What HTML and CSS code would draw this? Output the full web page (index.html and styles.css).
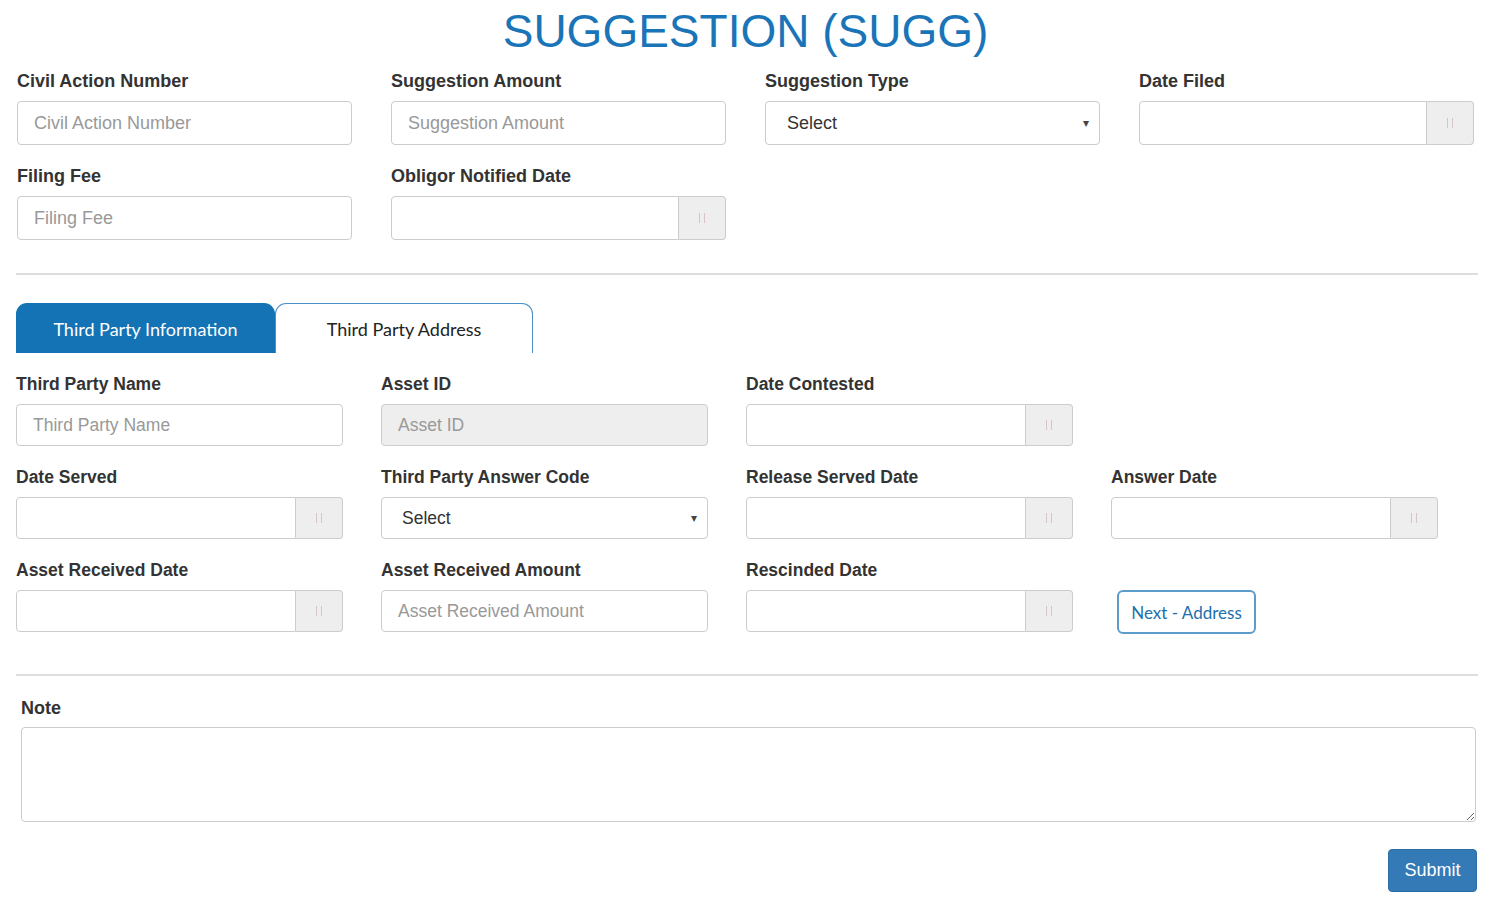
FILE: index.html
```html
<!DOCTYPE html>
<html>
<head>
<meta charset="utf-8">
<link rel="stylesheet" href="styles.css">
</head>
<body>
<h1 class="title">SUGGESTION (SUGG)</h1>

<div class="grid top">
  <div class="field">
    <label class="lbl">Civil Action Number</label>
    <input class="ctl" type="text" placeholder="Civil Action Number">
  </div>
  <div class="field">
    <label class="lbl">Suggestion Amount</label>
    <input class="ctl" type="text" placeholder="Suggestion Amount">
  </div>
  <div class="field">
    <label class="lbl">Suggestion Type</label>
    <div class="ctl sel"><span>Select</span><span class="arrow">&#9662;</span></div>
  </div>
  <div class="field">
    <label class="lbl">Date Filed</label>
    <div class="date"><input class="ctl" type="text"><span class="addon"><svg width="10" height="10" viewBox="0 0 10 10"><path d="M2.5 0v10M7.5 0v10" stroke="#d8c4c4" stroke-width="1"/></svg></span></div>
  </div>
  <div class="field">
    <label class="lbl">Filing Fee</label>
    <input class="ctl" type="text" placeholder="Filing Fee">
  </div>
  <div class="field">
    <label class="lbl">Obligor Notified Date</label>
    <div class="date"><input class="ctl" type="text"><span class="addon"><svg width="10" height="10" viewBox="0 0 10 10"><path d="M2.5 0v10M7.5 0v10" stroke="#d8c4c4" stroke-width="1"/></svg></span></div>
  </div>
</div>

<hr class="sep sep1">

<div class="tabs">
  <div class="tab active">Third Party Information</div>
  <div class="tab">Third Party Address</div>
</div>

<div class="grid second">
  <div class="field">
    <label class="lbl">Third Party Name</label>
    <input class="ctl" type="text" placeholder="Third Party Name">
  </div>
  <div class="field">
    <label class="lbl">Asset ID</label>
    <input class="ctl disabled" type="text" placeholder="Asset ID" disabled>
  </div>
  <div class="field">
    <label class="lbl">Date Contested</label>
    <div class="date"><input class="ctl" type="text"><span class="addon"><svg width="10" height="10" viewBox="0 0 10 10"><path d="M2.5 0v10M7.5 0v10" stroke="#d8c4c4" stroke-width="1"/></svg></span></div>
  </div>
  <div class="field empty"></div>

  <div class="field">
    <label class="lbl">Date Served</label>
    <div class="date"><input class="ctl" type="text"><span class="addon"><svg width="10" height="10" viewBox="0 0 10 10"><path d="M2.5 0v10M7.5 0v10" stroke="#d8c4c4" stroke-width="1"/></svg></span></div>
  </div>
  <div class="field">
    <label class="lbl">Third Party Answer Code</label>
    <div class="ctl sel"><span>Select</span><span class="arrow">&#9662;</span></div>
  </div>
  <div class="field">
    <label class="lbl">Release Served Date</label>
    <div class="date"><input class="ctl" type="text"><span class="addon"><svg width="10" height="10" viewBox="0 0 10 10"><path d="M2.5 0v10M7.5 0v10" stroke="#d8c4c4" stroke-width="1"/></svg></span></div>
  </div>
  <div class="field">
    <label class="lbl">Answer Date</label>
    <div class="date"><input class="ctl" type="text"><span class="addon"><svg width="10" height="10" viewBox="0 0 10 10"><path d="M2.5 0v10M7.5 0v10" stroke="#d8c4c4" stroke-width="1"/></svg></span></div>
  </div>

  <div class="field">
    <label class="lbl">Asset Received Date</label>
    <div class="date"><input class="ctl" type="text"><span class="addon"><svg width="10" height="10" viewBox="0 0 10 10"><path d="M2.5 0v10M7.5 0v10" stroke="#d8c4c4" stroke-width="1"/></svg></span></div>
  </div>
  <div class="field">
    <label class="lbl">Asset Received Amount</label>
    <input class="ctl" type="text" placeholder="Asset Received Amount">
  </div>
  <div class="field">
    <label class="lbl">Rescinded Date</label>
    <div class="date"><input class="ctl" type="text"><span class="addon"><svg width="10" height="10" viewBox="0 0 10 10"><path d="M2.5 0v10M7.5 0v10" stroke="#d8c4c4" stroke-width="1"/></svg></span></div>
  </div>
  <div class="field btnfield">
    <button class="next">Next - Address</button>
  </div>
</div>

<hr class="sep sep2">

<div class="note">
  <label class="lbl">Note</label>
  <textarea class="notearea"></textarea>
</div>

<div class="actions">
  <button class="submit">Submit</button>
</div>
</body>
</html>
```

FILE: styles.css
```css
* { box-sizing: border-box; }
body {
  margin: 0;
  font-family: "Liberation Sans", Arial, sans-serif;
  color: #333;
  background: #fff;
}
.title {
  margin: 0;
  padding-top: 6px;
  height: 71px;
  text-align: center;
  font-weight: normal;
  font-size: 46px;
  line-height: 50px;
  color: #1a75b8;
}
.grid {
  display: grid;
  grid-template-columns: repeat(4, 335px);
  column-gap: 39px;
}
.top {
  padding-left: 17px;
  row-gap: 21px;
}
.field {
  display: flex;
  flex-direction: column;
}
.lbl {
  display: block;
  font-weight: bold;
  font-size: 18px;
  line-height: 20px;
  height: 30px;
  color: #333;
}
.ctl {
  width: 100%;
  height: 44px;
  border: 1px solid #ccc;
  border-radius: 4px;
  padding: 0 16px;
  font-family: "Liberation Sans", Arial, sans-serif;
  font-size: 18px;
  color: #555;
  background: #fff;
  outline: none;
}
.ctl::placeholder { color: #999; }
.sel {
  display: flex;
  align-items: center;
  justify-content: space-between;
  padding: 0 10px 0 21px;
  color: #333;
}
.arrow {
  font-size: 12px;
  color: #444;
}
.date {
  display: flex;
  height: 44px;
}
.date .ctl {
  flex: 1;
  min-width: 0;
  border-radius: 4px 0 0 4px;
}
.addon {
  width: 47px;
  flex: none;
  display: flex;
  align-items: center;
  justify-content: center;
  background: #eee;
  border: 1px solid #ccc;
  border-left: none;
  border-radius: 0 4px 4px 0;
}
.sep {
  border: none;
  border-top: 2px solid #ddd;
  margin: 0 13px 0 16px;
}
.sep1 { margin-top: 33px; }
.tabs {
  display: flex;
  margin: 28px 0 0 16px;
  font-family: "Lato", "Open Sans", sans-serif;
  font-size: 18px;
}
.tab {
  height: 50px;
  display: flex;
  align-items: center;
  justify-content: center;
  border-radius: 11px 11px 0 0;
  border: 1px solid #4b91c6;
  border-bottom: none;
  width: 258px;
  color: #222;
  background: #fff;
}
.tab.active {
  width: 259px;
  background: #1473b4;
  border-color: #1473b4;
  color: #fff;
}
.second {
  padding-left: 16px;
  grid-template-columns: repeat(4, 327px);
  column-gap: 38px;
  row-gap: 21px;
  margin-top: 21px;
}
.second .lbl { font-size: 17.5px; }
.second .ctl { font-size: 17.5px; }
.second .ctl, .second .date { height: 42px; }
.second .sel { padding-left: 20px; }
.disabled { background: #eee; }
.btnfield {
  justify-content: flex-start;
  padding-top: 30px;
  padding-left: 6px;
}
.next {
  width: 139px;
  height: 44px;
  border: 2px solid #5b9ccd;
  border-radius: 6px;
  background: #fff;
  color: #1e6fae;
  font-family: "Lato", "Open Sans", sans-serif;
  font-size: 17px;
}
.sep2 { margin-top: 40px; }
.note {
  padding: 22px 16px 0 21px;
}
.note .lbl { height: 29px; }
.notearea {
  display: block;
  width: 1455px;
  height: 95px;
  border: 1px solid #ccc;
  border-radius: 4px;
  resize: vertical;
  font-family: "Liberation Sans", Arial, sans-serif;
}
.actions {
  display: flex;
  justify-content: flex-end;
  padding: 27px 14px 0 0;
}
.submit {
  width: 89px;
  height: 43px;
  background: #337ab7;
  border: 1px solid #2e6da4;
  border-radius: 4px;
  color: #fff;
  font-family: "Liberation Sans", Arial, sans-serif;
  font-size: 18px;
}
```
